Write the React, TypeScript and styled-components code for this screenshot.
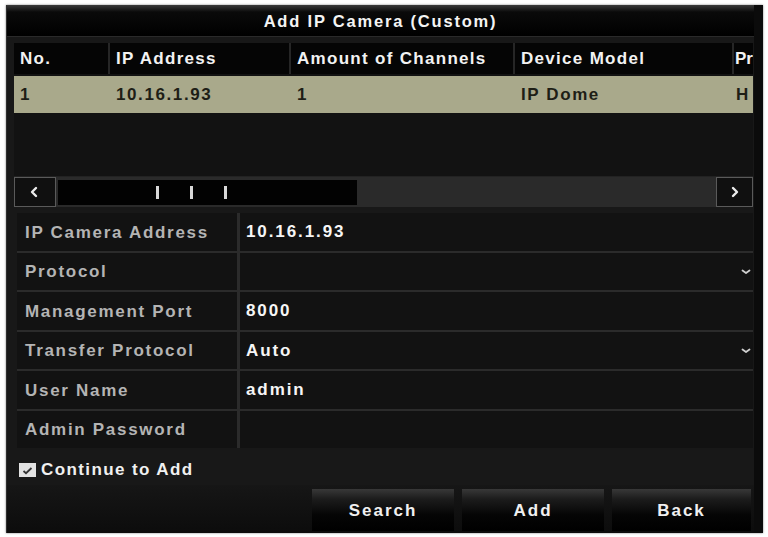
import styled, { createGlobalStyle } from 'styled-components';

const GlobalStyle = createGlobalStyle`
    html, body {
        margin: 0;
        padding: 0;
        background: #ffffff;
    }
    body {
        font-family: "Liberation Sans", Arial, sans-serif;
    }
`;

const columns = ['No.', 'IP Address', 'Amount of Channels', 'Device Model', 'Pr'];
const cameraRow = ['1', '10.16.1.93', '1', 'IP Dome', 'H'];

const fields = [
    { label: 'IP Camera Address', value: '10.16.1.93', select: false },
    { label: 'Protocol', value: '', select: true },
    { label: 'Management Port', value: '8000', select: false },
    { label: 'Transfer Protocol', value: 'Auto', select: true },
    { label: 'User Name', value: 'admin', select: false },
    { label: 'Admin Password', value: '', select: false },
];

const Chevron = ({ dir }: { dir: 'left' | 'right' | 'down' }) => {
    const points = {
        left: '7,2 3,6 7,10',
        right: '4,2 8,6 4,10',
        down: '2.5,4.5 6,7 9.5,4.5',
    }[dir];
    return (
        <svg width="12" height="12" viewBox="0 0 12 12">
            <polyline points={points} fill="none" stroke={dir === 'down' ? '#cfcfcf' : '#ececec'}
                strokeWidth={dir === 'down' ? 1.8 : 2.4} strokeLinecap="round" strokeLinejoin="round" />
        </svg>
    );
};

const App = () => {
    return (
        <Page>
            <GlobalStyle />
            <Dialog>
                <TitleBar>Add IP Camera (Custom)</TitleBar>
                <Content>
                    <TableBox>
                        <HeaderRow>
                            {columns.map(c => <HeaderCell key={c}>{c}</HeaderCell>)}
                        </HeaderRow>
                        <SelectedRow>
                            {cameraRow.map((c, i) => <RowCell key={i}>{c}</RowCell>)}
                        </SelectedRow>
                        <TableBody />
                        <ScrollBar>
                            <ScrollButton $width={42}><Chevron dir="left" /></ScrollButton>
                            <ScrollTrack>
                                <ScrollThumb>
                                    <Grip /><Grip /><Grip />
                                </ScrollThumb>
                            </ScrollTrack>
                            <ScrollButton $width={37}><Chevron dir="right" /></ScrollButton>
                        </ScrollBar>
                    </TableBox>

                    <Form>
                        {fields.map(f => (
                            <FieldRow key={f.label}>
                                <Label>{f.label}</Label>
                                <Value>
                                    <span>{f.value}</span>
                                    {f.select && <Chevron dir="down" />}
                                </Value>
                            </FieldRow>
                        ))}
                    </Form>

                    <CheckRow>
                        <CheckBox>
                            <svg width="11" height="9" viewBox="0 0 11 9">
                                <polyline points="1.5,5 4,7.2 9.5,2" fill="none" stroke="#333" strokeWidth="1.8" />
                            </svg>
                        </CheckBox>
                        Continue to Add
                    </CheckRow>
                </Content>
                <ButtonBar>
                    <Button $width={142}>Search</Button>
                    <Button $width={142}>Add</Button>
                    <Button $width={139}>Back</Button>
                </ButtonBar>
            </Dialog>
        </Page>
    );
};

const Page = styled.div`
    width: 768px;
    height: 537px;
    padding: 5px 0 0 6px;
    box-sizing: border-box;
    background: #ffffff;
`;

const Dialog = styled.div`
    width: 757px;
    height: 528px;
    background: #181818;
    border-right: 9px solid #0b0b0b;
    border-left: 1px solid #2e2e2e;
    box-sizing: border-box;
    display: flex;
    flex-direction: column;
    box-shadow: 0 0 2px rgba(0, 0, 0, 0.5);
`;

const TitleBar = styled.div`
    height: 32px;
    flex-shrink: 0;
    display: flex;
    align-items: center;
    justify-content: center;
    padding-top: 1px;
    box-sizing: border-box;
    background: linear-gradient(#3a3a3a 0px, #0a0a0a 7px, #000 31px);
    border-bottom: 1px solid #2a2a2a;
    color: #f4f4f4;
    font-weight: bold;
    font-size: 16.5px;
    letter-spacing: 1.8px;
`;

const Content = styled.div`
    padding: 6px 1px 0 7px;
    display: flex;
    flex-direction: column;
`;

const TableBox = styled.div`
    height: 164px;
    display: flex;
    flex-direction: column;
    overflow: hidden;
    background: #121212;
`;

const gridCols = '94px 179px 222px 217px 19px';

const HeaderRow = styled.div`
    display: grid;
    grid-template-columns: ${gridCols};
    column-gap: 2px;
    height: 31px;
    background: #262626;
`;

const HeaderCell = styled.div`
    background: #050505;
    color: #f2f2f2;
    font-weight: bold;
    font-size: 17px;
    letter-spacing: 1.3px;
    display: flex;
    align-items: center;
    padding-left: 6px;
    white-space: nowrap;
    overflow: hidden;
    &:last-child {
        padding-left: 1px;
        letter-spacing: 0;
    }
`;

const SelectedRow = styled.div`
    display: grid;
    grid-template-columns: ${gridCols};
    column-gap: 2px;
    height: 37px;
    margin-top: 2px;
    background: #a9a98b;
`;

const RowCell = styled.div`
    color: #1e1e16;
    font-weight: bold;
    font-size: 17px;
    letter-spacing: 1.6px;
    display: flex;
    align-items: center;
    padding-left: 6px;
    white-space: nowrap;
    overflow: hidden;
    &:last-child {
        padding-left: 2px;
    }
`;

const TableBody = styled.div`
    flex: 1;
    background: #121212;
`;

const ScrollBar = styled.div`
    height: 30px;
    display: flex;
    align-items: stretch;
    background: #2a2a2a;
    border-top: 1px solid #222;
`;

const ScrollButton = styled.div<{ $width: number }>`
    width: ${p => p.$width}px;
    flex-shrink: 0;
    display: flex;
    align-items: center;
    justify-content: center;
    background: #101010;
    border: 1px solid #5a5a5a;
    box-sizing: border-box;
`;

const ScrollTrack = styled.div`
    flex: 1;
    display: flex;
    padding: 3px 0 2px 2px;
`;

const ScrollThumb = styled.div`
    width: 299px;
    background: #020202;
    display: flex;
    align-items: center;
    gap: 31px;
    padding-left: 98px;
    box-sizing: border-box;
`;

const Grip = styled.div`
    width: 3px;
    height: 13px;
    background: #d8d8d8;
`;

const Form = styled.div`
    margin: 6px 0 0 3px;
    display: flex;
    flex-direction: column;
    gap: 2px;
    background: #2b2b2b;
    width: 736px;
`;

const FieldRow = styled.div`
    display: grid;
    grid-template-columns: 220px 1fr;
    column-gap: 3px;
    height: 37.5px;
`;

const Label = styled.div`
    background: #121212;
    color: #b4b4b4;
    font-weight: bold;
    font-size: 17px;
    letter-spacing: 1.7px;
    display: flex;
    align-items: center;
    padding: 2px 0 0 8px;
`;

const Value = styled.div`
    background: #121212;
    color: #f6f6f6;
    font-weight: bold;
    font-size: 17px;
    letter-spacing: 1.9px;
    display: flex;
    align-items: center;
    justify-content: space-between;
    padding: 1px 1px 0 6px;
`;

const CheckRow = styled.div`
    height: 30px;
    margin-top: 7px;
    display: flex;
    align-items: center;
    gap: 5px;
    padding-left: 5px;
    color: #f0f0f0;
    font-weight: bold;
    font-size: 17px;
    letter-spacing: 1.4px;
`;

const CheckBox = styled.div`
    width: 17px;
    height: 14px;
    background: #e2e2e2;
    display: flex;
    align-items: center;
    justify-content: center;
`;

const ButtonBar = styled.div`
    flex: 1;
    display: flex;
    justify-content: flex-end;
    align-items: flex-end;
    gap: 8px;
    padding: 0 3px 2px 0;
    background: linear-gradient(#161616, #0c0c0c);
`;

const Button = styled.div<{ $width: number }>`
    width: ${p => p.$width}px;
    height: 42px;
    display: flex;
    align-items: center;
    justify-content: center;
    padding-top: 2px;
    box-sizing: border-box;
    background: linear-gradient(#383838 0px, #1c1c1c 10px, #050505 26px, #000 42px);
    color: #f0f0f0;
    font-weight: bold;
    font-size: 17px;
    letter-spacing: 2px;
`;

export default App;
